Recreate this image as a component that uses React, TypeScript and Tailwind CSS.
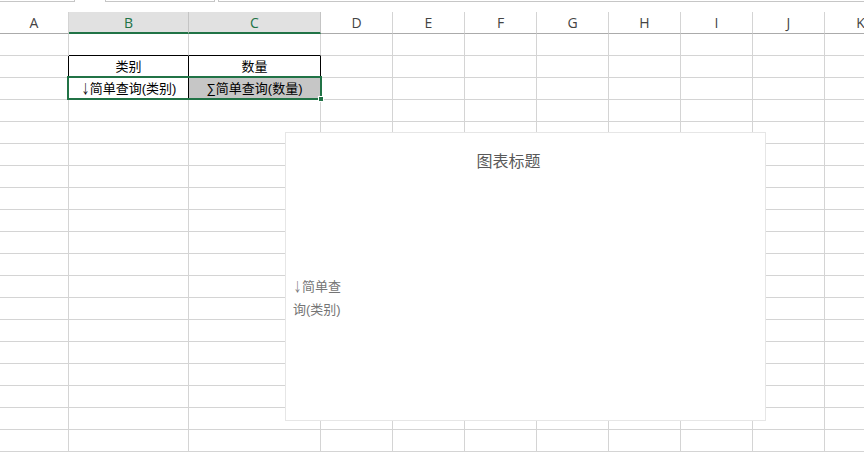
import React from 'react';

const COLS = [
  { name: 'A', w: 69 },
  { name: 'B', w: 120 },
  { name: 'C', w: 132 },
  { name: 'D', w: 72 },
  { name: 'E', w: 72 },
  { name: 'F', w: 72 },
  { name: 'G', w: 72 },
  { name: 'H', w: 72 },
  { name: 'I', w: 72 },
  { name: 'J', w: 72 },
  { name: 'K', w: 72 },
];

const SELECTED = ['B', 'C'];
const ROW_COUNT = 19;

const font = { fontFamily: '"Liberation Sans", "Noto Sans CJK SC", sans-serif' };

// full-height narrow down arrow, like the one Excel draws
const Arrow = () => (
  <span
    className="inline-block -mx-[2px] scale-x-[0.65]"
    style={{ fontFamily: '"Noto Sans CJK SC", sans-serif' }}
  >
    ↓
  </span>
);

// cell borders: black around the little table in B2:C3, grey gridlines elsewhere
function cellClass(row: number, col: string) {
  const inTable = (col === 'B' || col === 'C') && (row === 2 || row === 3);
  const aboveTable = (col === 'B' || col === 'C') && row === 1;
  const leftOfTable = col === 'A' && (row === 2 || row === 3);
  const right = inTable || leftOfTable ? 'border-r-black' : 'border-r-[#d4d4d4]';
  const bottom = inTable || aboveTable ? 'border-b-black' : 'border-b-[#d4d4d4]';
  return `${right} ${bottom}`;
}

const HeaderCell: React.FC<{ name: string; w: number }> = ({ name, w }) => {
  const sel = SELECTED.includes(name);
  return (
    <div
      style={{ width: w }}
      className={`shrink-0 h-[22px] flex items-center justify-center text-[14px] border-r ${
        sel
          ? 'bg-[#e1e1e1] text-[#217346] border-r-[#c4c4c4] border-b-2 border-b-[#217346]'
          : 'bg-white text-[#444444] border-r-[#d4d4d4] border-b border-b-[#ababab]'
      }`}
    >
      <span style={{ fontFamily: '"Open Sans", "Noto Sans", sans-serif' }} className={sel ? 'pt-[1px]' : ''}>
        {name}
      </span>
    </div>
  );
};

export default function App() {
  const rows = Array.from({ length: ROW_COUNT }, (_, i) => i + 1);

  const cellText = (row: number, col: string): React.ReactNode => {
    if (row === 2 && col === 'B') return '类别';
    if (row === 2 && col === 'C') return '数量';
    if (row === 3 && col === 'B')
      return (
        <span>
          <Arrow />
          简单查询(类别)
        </span>
      );
    if (row === 3 && col === 'C') return '∑简单查询(数量)';
    return '';
  };

  return (
    <div className="relative w-[864px] h-[452px] overflow-hidden bg-white text-black" style={font}>
      {/* bottom edges of the name box / formula bar */}
      <div className="relative h-[12px] flex">
        <div className="w-[75px] h-[2px] border-b border-r border-[#c6c6c6]" />
        <div className="ml-[30px] w-[110px] h-[2px] border-b border-x border-[#c6c6c6]" />
        <div className="ml-[3px] flex-1 h-[2px] border-b border-l border-[#c6c6c6]" />
      </div>

      {/* column headers */}
      <div className="flex">
        {COLS.map((c) => (
          <HeaderCell key={c.name} name={c.name} w={c.w} />
        ))}
      </div>

      {/* grid */}
      {rows.map((r) => (
        <div key={r} className="flex">
          {COLS.map((c) => {
            const grey = r === 3 && c.name === 'C';
            return (
              <div
                key={c.name}
                style={{ width: c.w }}
                className={`shrink-0 h-[22px] border-r border-b flex items-center justify-center text-[13px] ${cellClass(r, c.name)} ${
                  grey ? 'bg-[#c6c6c6]' : ''
                }`}
              >
                {cellText(r, c.name)}
              </div>
            );
          })}
        </div>
      ))}

      {/* selection outline + fill handle */}
      <div className="absolute left-[67px] top-[76px] w-[255px] h-[24px] border-2 border-[#217346] pointer-events-none" />
      <div className="absolute left-[318px] top-[96px] w-[6px] h-[6px] bg-[#217346] border border-white" />

      {/* chart */}
      <div className="absolute left-[285px] top-[132px] w-[481px] h-[289px] bg-white border border-[#e6e6e6]">
        <div className="flex flex-col h-full">
          <div className="pt-[17px] pr-[34px] text-center text-[16px] text-[#595959]">图表标题</div>
          <div className="mt-[100px] ml-[7px] text-[13px] leading-[23px] text-[#757575]">
            <div>
              <Arrow />
              简单查
            </div>
            <div>询(类别)</div>
          </div>
        </div>
      </div>
    </div>
  );
}
